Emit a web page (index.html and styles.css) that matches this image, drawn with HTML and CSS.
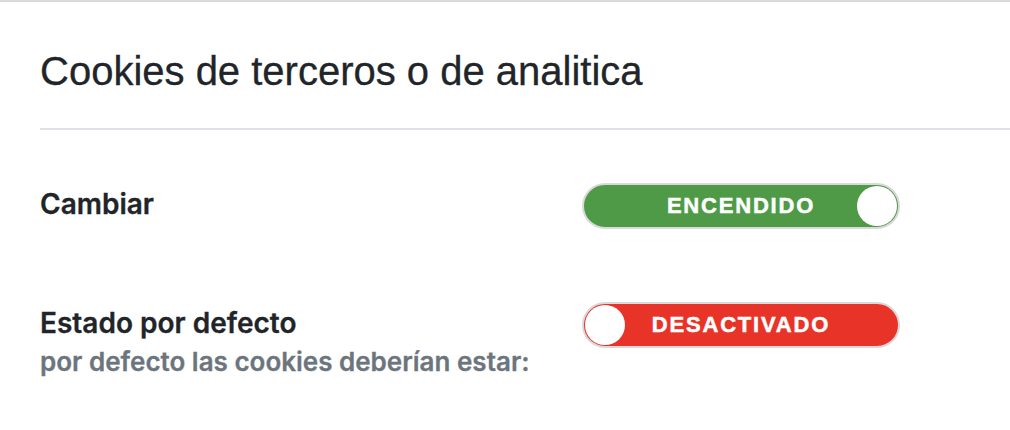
FILE: index.html
```html
<!DOCTYPE html>
<html lang="es">
<head>
    <meta charset="UTF-8">
    <meta name="viewport" content="width=device-width, initial-scale=1.0">
    <title>Cookies de terceros o de analitica</title>
    <link rel="stylesheet" href="styles.css">
</head>
<body>

<div class="panel">
    <div class="panel-header">
        <h5 class="panel-title">Cookies de terceros o de analitica</h5>
    </div>

    <div class="panel-body">
        <div class="setting-row">
            <div class="setting-label">Cambiar</div>
            <div class="toggle on">
                <span class="toggle-text">ENCENDIDO</span>
                <span class="toggle-knob"></span>
            </div>
        </div>

        <div class="setting-row">
            <div class="setting-label">
                Estado por defecto
                <div class="setting-hint">por defecto las cookies deberían estar:</div>
            </div>
            <div class="toggle off">
                <span class="toggle-knob"></span>
                <span class="toggle-text">DESACTIVADO</span>
            </div>
        </div>
    </div>
</div>

</body>
</html>
```

FILE: styles.css
```css
body {
    margin: 0;
    background-color: #fff;
    color: #212529;
    font-family: Inter, "Noto Sans", sans-serif;
}
.panel {
    border-top: 2px solid #d9d9d9;
    padding-left: 40px;
}
.panel-header {
    padding-top: 45px;
    padding-bottom: 33px;
    border-bottom: 2px solid #dee2e6;
}
.panel-title {
    margin: 0;
    font-family: "Liberation Sans", Arial, sans-serif;
    font-size: 40px;
    font-weight: normal;
    line-height: 1.2;
    -webkit-text-stroke: 0.3px #212529;
}
.panel-body {
    display: flex;
    flex-direction: column;
    gap: 73px;
    padding-top: 53px;
}
.setting-row {
    display: flex;
    align-items: flex-start;
}
.setting-label {
    width: 542px;
    font-size: 28px;
    font-weight: 600;
    line-height: 1.5;
    -webkit-text-stroke: 0.3px currentColor;
}
.setting-hint {
    font-size: 26px;
    line-height: 1.4;
    color: #6c757d;
}
.toggle {
    position: relative;
    display: flex;
    align-items: center;
    width: 312px;
    height: 42px;
    padding: 0 1px;
    border: 2px solid #d9d9d9;
    border-radius: 24px;
    box-sizing: content-box;
}
.toggle.on {
    background-color: #4f9a46;
    justify-content: flex-end;
}
.toggle.off {
    background-color: #e83428;
}
.toggle-text {
    position: absolute;
    left: 0;
    right: 0;
    text-align: center;
    font-family: "Liberation Sans", Arial, sans-serif;
    font-size: 22px;
    font-weight: bold;
    letter-spacing: 1.8px;
    color: #fff;
    -webkit-text-stroke: 0.5px #fff;
}
.toggle-knob {
    width: 40px;
    height: 40px;
    border-radius: 50%;
    background-color: #fff;
}
```
